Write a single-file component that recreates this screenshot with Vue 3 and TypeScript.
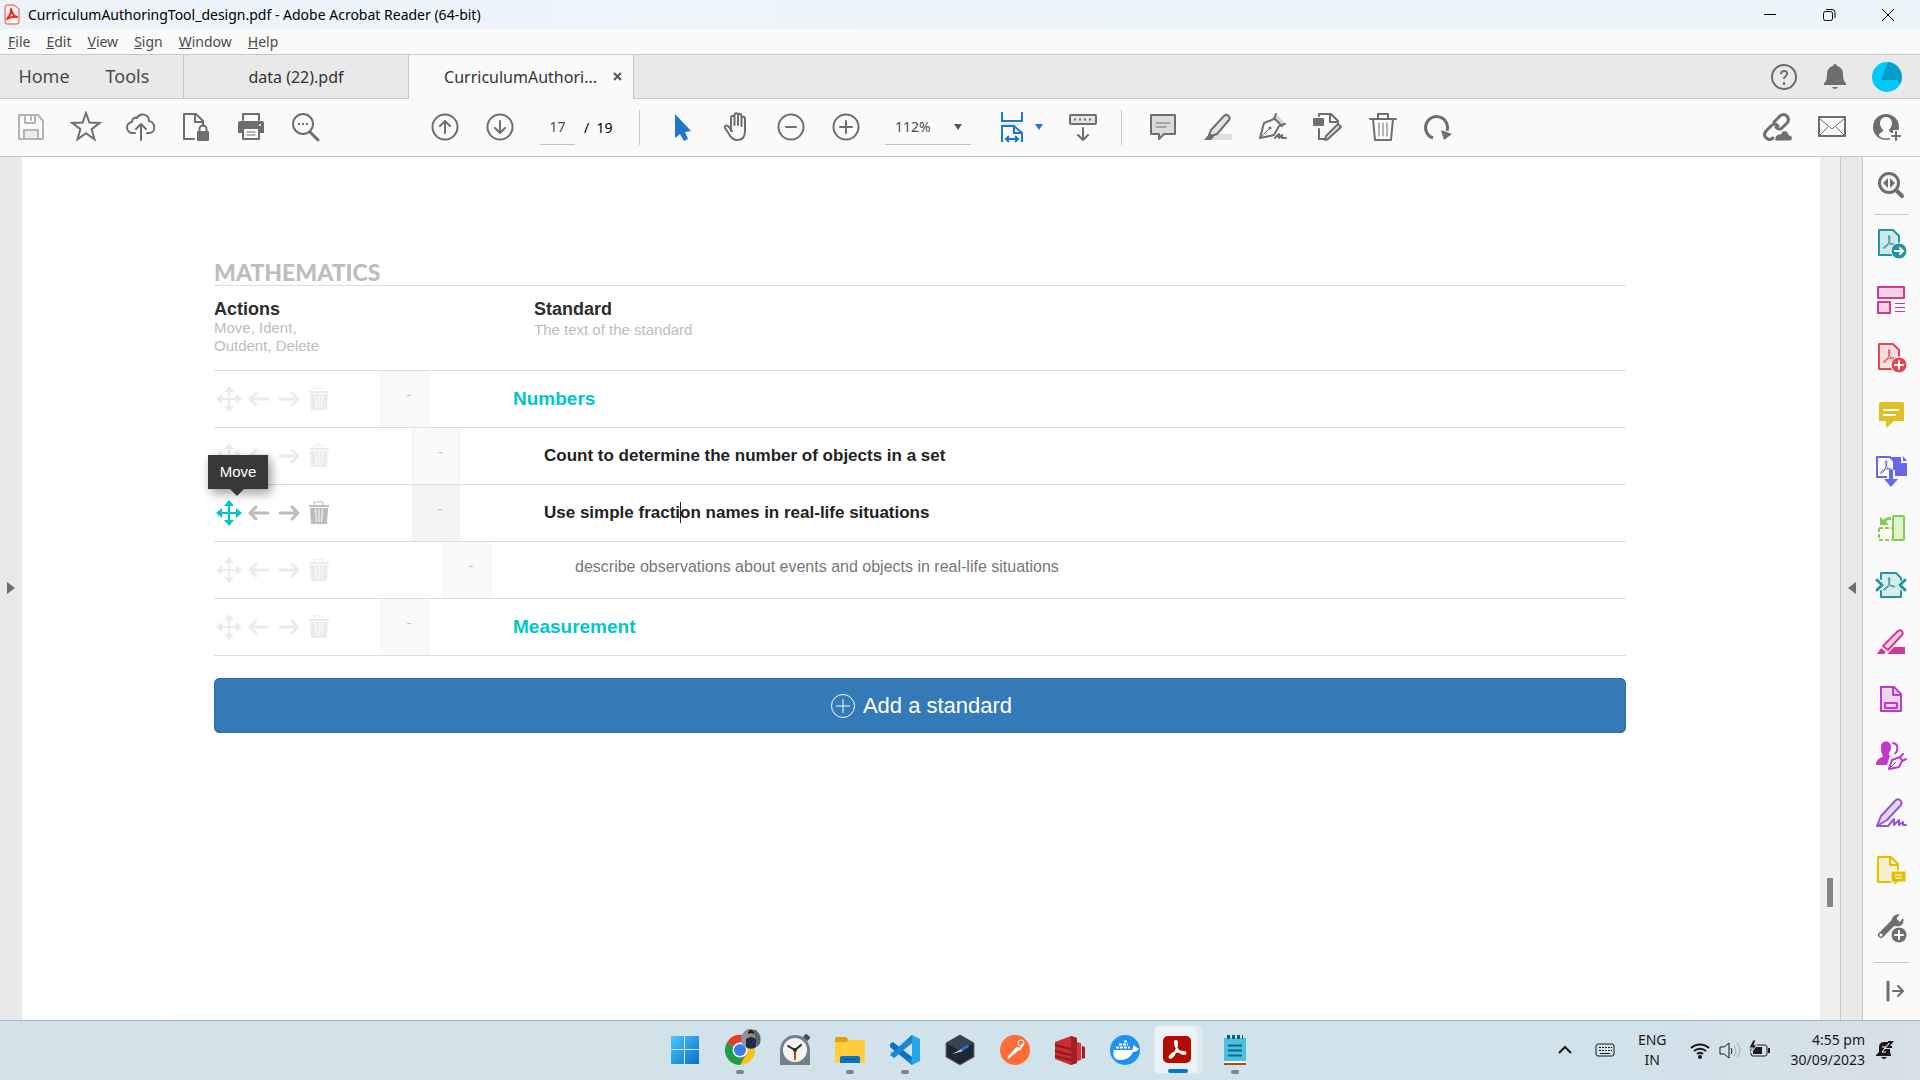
<script setup lang="ts">
interface Glyph {
  label: string
  body: string
}

interface Standard {
  level: number
  kind: 'strand' | 'outcome' | 'detail'
  text: string
  rest?: string
  active?: boolean
}

const menus: string[] = ['File', 'Edit', 'View', 'Sign', 'Window', 'Help']

const stroke = (color: string, width = 2) =>
  `fill="none" stroke="${color}" stroke-width="${width}" stroke-linecap="round" stroke-linejoin="round"`

// same as stroke(), for outlines that also carry a tint
const tinted = (color: string, fill: string) =>
  `fill="${fill}" stroke="${color}" stroke-width="2" stroke-linecap="round" stroke-linejoin="round"`

const G = '#6e6e6e'
const acroMark = (c: string, w = 1) =>
  `<path d="M14 9c-1 0-1 2 0 4 1 3 3 5 5 5 1 0 1-1 0-1-3-1-8 1-10 3-1 1 0 2 1 1 2-2 5-7 5-11 0-1-1-1-1-1z" ${stroke(c, w)}/>`

const fileTools: Glyph[] = [
  { label: 'Save', body: `<g ${stroke('#b4b4b4', 2)}><path d="M4 4h19l5 6v18H4z"/><path d="M10 4v8h10V4M16 6v3" /></g><path d="M9 28v-9h14v9z" ${tinted('#b4b4b4', '#ececec')}/>` },
  { label: 'Star', body: `<path d="M16 2l3.4 9.6 10.4.3-8.200 6.300 2.900 10L16 22.300 7.500 28.200l2.900-10L2.200 11.900l10.400-.3z" fill="none" stroke="${G}" stroke-width="2"/>` },
  { label: 'Upload to cloud', body: `<g ${stroke(G, 2)}><path d="M10 22H8a5.500 5.500 0 0 1-1-11c0-4 3-5 5-4 3-6 12-4 12 3 7 1 7 12 0 12h-2"/><path d="M16 29V14M11 18l5-5 5 5"/></g>` },
  { label: 'Protect', body: `<g ${stroke(G, 2)}><path d="M14 28H4V3h12l7 7v5"/><path d="M15 3v8h8"/></g><rect x="17" y="20" width="12" height="10" rx="1" fill="${G}"/><path d="M19.500 21v-3a3.500 3.500 0 0 1 7 0v3" ${stroke(G, 2)}/>` },
  { label: 'Print', body: `<path d="M8 9V3h16v6" ${stroke(G, 2)}/><path d="M5 10h22q2 0 2 2v10h-5v-4H8v4H3V12q0-2 2-2z" fill="${G}"/><path d="M8 17h16v11H8z" ${tinted(G, '#fafafa')}/><path d="M12 21h8M12 24h8" ${stroke(G, 1)}/><circle cx="25" cy="14" r="1" fill="#fff"/>` },
  { label: 'Find', body: `<circle cx="13" cy="13" r="10" ${stroke(G, 2)}/><path d="M20 21l8 8" ${stroke(G, 3)}/><path d="M8 13h2M12 13h2M16 13h2" stroke="${G}" stroke-width="2"/>` }
]

const pageTools: Glyph[] = [
  { label: 'Previous page', body: `<circle cx="16" cy="16" r="12.500" ${stroke(G, 2)}/><path d="M16 22V10M11 15l5-5 5 5" ${stroke(G, 2)}/>` },
  { label: 'Next page', body: `<circle cx="16" cy="16" r="12.500" ${stroke(G, 2)}/><path d="M16 10v12M11 17l5 5 5-5" ${stroke(G, 2)}/>` }
]

const viewTools: Glyph[] = [
  { label: 'Select', body: `<path d="M10 3v24l5-4 4 7 4-2-3-7 6-1z" fill="#2076cc"/>` },
  { label: 'Hand', body: `<path d="M10 20V7c0-3 3.500-3 3.500 0v7V4.500c0-3 3.500-3 3.500 0V14 5c0-3 3.500-3 3.500 0v10V8c0-3 3.500-3 3.500 0v12c0 6-3 9-8 9-4 0-6-2-8-6l-4-6c-1-2 1-3 3-2l4 5" transform="translate(1 0)" ${stroke(G, 2)}/>` },
  { label: 'Zoom out', body: `<circle cx="16" cy="16" r="12.500" ${stroke(G, 2)}/><path d="M11 16h10" ${stroke(G, 2)}/>` },
  { label: 'Zoom in', body: `<circle cx="16" cy="16" r="12.500" ${stroke(G, 2)}/><path d="M10 16h12M16 10v12" ${stroke(G, 2)}/>` }
]

const fitIcon = `<g fill="none" stroke="#2076cc" stroke-width="2"><path d="M6 1v9h20V1"/><path d="M6 31V15h12l8 7v9"/><path d="M18 15v7h8" /><path d="M10 28h12M13 25l-3 3 3 3M19 25l3 3-3 3"/></g><path d="M6 12h20v2H6z" fill="#d5e6f5"/>`
const keyboardIcon = `<rect x="3" y="4" width="26" height="9" rx="1" ${tinted(G, '#e4e4e4')}/><path d="M7 8.500h18" stroke="${G}" stroke-width="2" stroke-dasharray="2 3"/><path d="M16 17v12M11 24l5 5 5-5" ${stroke(G, 2)}/>`

const markupTools: Glyph[] = [
  { label: 'Comment', body: `<path d="M4 4h24v19H17l-5 5v-5H4z" ${tinted(G, '#dcdcdc')}/><path d="M9 12h14M9 16h10" ${stroke(G, 1)}/>` },
  { label: 'Highlight', body: `<path d="M11 23h19v6H8z" fill="#dedede"/><path d="M9 19L22 5c3-3 7 1 5 4L15 23l-6 2-2-1z" ${tinted(G, '#e4e4e4')}/><path d="M2 29l6-7 4 4-3 3z" fill="${G}"/>` },
  { label: 'Sign', body: `<path d="M19 3l10 10-3 1-9-8z" fill="#d5d5d5"/><path d="M19 3l-2 5-10 4L3 27l14-3 5-9 6-2M17 7l8 8" ${stroke(G, 2)}/><path d="M3 27l9-9" ${stroke(G, 1)}/><circle cx="13" cy="17" r="1.500" fill="${G}"/><path d="M18 27l4-4v4l3-3v3h4" ${stroke(G, 2)}/>` },
  { label: 'Edit PDF', body: `<g ${stroke(G, 2)}><path d="M7 5V3h12l7 7v2M18 3v8h8M7 18v10h6"/></g><path d="M29 16l-13 12-3 1 1-4 12-12z" ${tinted(G, '#dddddd')}/><rect x="1" y="7" width="11" height="8" rx="1" fill="${G}"/>` },
  { label: 'Delete', body: `<path d="M6 8l2 21h16l2-21M11 7V3h10v4M3 8h26" ${stroke(G, 2)}/><path d="M12 12v13M16 12v13M20 12v13" ${stroke(G, 1)}/>` },
  { label: 'Rotate', body: `<path d="M11 27a11 11 0 1 1 14-7" fill="none" stroke="${G}" stroke-width="3"/><path d="M19 19l11 4-8 6z" fill="${G}"/>` }
]

const shareTools: Glyph[] = [
  { label: 'Share link', body: `<g ${stroke(G, 3)}><path d="M13 11l6-6c5-4 11 2 7 7l-5 5c-2 2-5 1-6-1"/><path d="M17 15c-3-3-5-2-7 0l-5 5c-4 5 2 11 7 7"/></g><path d="M15 30h13c5 0 4-6 0-6-1-6-8-5-8-1-5-1-8 6-5 7z" fill="${G}" stroke="#fafafa"/>` },
  { label: 'Send by email', body: `<path d="M3 6h26v19H3z" ${stroke(G, 2)}/><path d="M3 7l13 11L29 7M3 25l9-9M29 25l-9-9" ${stroke(G, 1)}/>` },
  { label: 'Add people', body: `<circle cx="15" cy="16" r="13" fill="${G}"/><path d="M8 25c-1-3 5-4 4-6-6-7-2-13 3-13s9 6 3 13c-1 2 5 3 4 6q-7 5-14 0z" fill="#fafafa"/><path d="M25 19v11M19 25h11" stroke="#fafafa" stroke-width="6"/><path d="M25 21v8M21 25h8" ${stroke(G, 2)}/>` }
]

const docShape = (c: string, fill: string) =>
  `<path d="M4 3h14l6 6v19H4z" ${tinted(c, fill)}/>` + acroMark(c, 1)

const sideTools: Glyph[] = [
  { label: 'Export PDF', body: docShape('#21979b', '#d1e8ea') + `<circle cx="24" cy="24" r="8" fill="#21979b" stroke="#fafafa" stroke-width="1"/><path d="M20 24h8M25 21l3 3-3 3" ${stroke('#fff', 2)}/>` },
  { label: 'Organize pages', body: `<rect x="3" y="3" width="26" height="11" ${tinted('#d83790', '#f5d3e6')}/><rect x="3" y="18" width="12" height="11" ${tinted('#d83790', '#f5d3e6')}/><path d="M20 19.500h10M20 23.500h10M20 27.500h10" stroke="#d83790"/>` },
  { label: 'Create PDF', body: docShape('#e34850', '#f9dcdd') + `<circle cx="24" cy="24" r="8" fill="#e34850" stroke="#fafafa"/><path d="M20 24h8M24 20v8" ${stroke('#fff', 2)}/>` },
  { label: 'Comment', body: `<path d="M5 4h22q2 0 2 2v17H19l-8 7v-7H4V6z" fill="#dfbf28"/><path d="M9 12h14M9 17h11" ${stroke('#fff', 2)}/>` },
  { label: 'Combine files', body: `<path d="M17 2h9v6h6v13H19z" fill="#6767ec"/><path d="M28 1l4 5h-4z" fill="#6767ec"/><path d="M2 2h13l4 4v16H2z" ${tinted('#6767ec', '#fafafa')}/><g transform="translate(-3 -3)">${acroMark('#6767ec')}</g><path d="M16 15v13" stroke="#fafafa" stroke-width="8"/><path d="M14 15h4v9h5l-7 8-7-8h5z" fill="#6767ec"/>` },
  { label: 'Crop pages', body: `<rect x="18" y="4" width="11" height="24" rx="1" ${tinted('#82ce48', '#e0f2d2')}/><path d="M4 16h13M4 28h13M4 16v12" fill="none" stroke="#82ce48" stroke-width="2" stroke-dasharray="4 2"/><path d="M5 5v8h9l-3-3c1-2 3-2 5-2V5c-4 0-6 1-7 3z" fill="#82ce48"/>` },
  { label: 'Compress PDF', body: `<path d="M6 10V4h15l5 5v2l-3 5 3 5v7H6v-7l3-5-3-5z" fill="#d9edef"/><path d="M6 10V4h15l5 5v2M6 22v6h20v-6" ${stroke('#21979b', 2)}/>${acroMark('#21979b')}<path d="M2 11l5 5-5 5M30 11l-5 5 5 5" ${stroke('#21979b', 3)}/>` },
  { label: 'Redact', body: `<path d="M8 20L23 5c3-2 6 1 4 4L13 24z" ${tinted('#d83790', '#f7d3e6')}/><path d="M2 28l4-6 5 4-2 2zM12 28l7-7h11v7z" fill="#d83790"/>` },
  { label: 'Prepare form', body: `<path d="M6 4h13l7 7v17H6z" ${tinted('#c038cc', '#f0d5f2')}/><path d="M18 4v8h8M10 20h12v5H10z" ${stroke('#c038cc', 2)}/>` },
  { label: 'Request signatures', body: `<path d="M6 7c0-8 11-7 10 1 0 3-3 5-2 7l5 4-4 6H1c0-7 6-7 7-9-1-2-2-4-2-9z" fill="#c038cc"/><path d="M18 3c6 1 5 8 2 11" ${stroke('#c038cc', 2)}/><path d="M14 29l3-10 9-4 3 6-5 6z" fill="#fafafa" stroke="#fafafa" stroke-width="6"/><path d="M14 29l3-9 8-3 3-3M14 29l10-2 3-6 4-2M25 17l2 4" ${stroke('#c038cc', 2)}/><path d="M14 29l7-7" ${stroke('#c038cc', 1)}/>` },
  { label: 'Fill and sign', body: `<path d="M2 29l4-10L20 4c3-4 8 0 6 4L12 23z" ${tinted('#9256d9', '#e4d7f4')}/><path d="M2 29h11l6-7v6l5-5v5l4-3v3h3" ${stroke('#9256d9', 2)}/>` },
  { label: 'Send for comments', body: `<path d="M3 3h13l7 7v18H3z" ${tinted('#e0c000', '#f5f0cd')}/><path d="M15 3v8h8" ${stroke('#e0c000', 2)}/><path d="M16 17h15v11h-8l-4 4v-4h-3z" fill="#e0c000" stroke="#fafafa"/><path d="M20 21h7M20 24h7" stroke="#fff"/>` },
  { label: 'More tools', body: `<path d="M6 24L20 10" ${stroke(G, 6)}/><path d="M25 3l-4 5 4 3 3-4c2 5-2 10-8 8-6-3-4-12 5-12z" fill="${G}"/><circle cx="6" cy="24" r="1.500" fill="#fff"/><circle cx="24" cy="24" r="8" fill="${G}" stroke="#fafafa"/><path d="M20 24h8M24 20v8" ${stroke('#fff', 2)}/>` }
]

const searchSide = `<circle cx="14" cy="14" r="9.500" ${stroke(G, 3)}/><path d="M22 22l5 5" ${stroke(G, 4)}/><path d="M13 9v10l-5-5zM15 9v10l5-5z" fill="${G}"/>`
const collapseSide = `<path d="M13 7v18" ${stroke(G, 3)}/><path d="M18 16h9M23 11l5 5-5 5" ${stroke(G, 2)}/>`

const actions: Glyph[] = [
  { label: 'Move', body: `<path d="M16 3l5 6h-4v6h6v-4l6 5-6 5v-4h-6v6h4l-5 6-5-6h4v-6H9v4l-6-5 6-5v4h6V9h-4z"/>` },
  { label: 'Outdent', body: `<path d="M25 16H8M13 10l-6 6 6 6" fill="none" stroke="currentColor" stroke-width="3" stroke-linecap="round" stroke-linejoin="round"/>` },
  { label: 'Indent', body: `<path d="M7 16h17M19 10l6 6-6 6" fill="none" stroke="currentColor" stroke-width="3" stroke-linecap="round" stroke-linejoin="round"/>` },
  { label: 'Delete', body: `<path d="M6 8h20v2H6zM7 11h18l-1 16H8z"/><path d="M11 8V5h9v3" fill="none" stroke="currentColor" stroke-width="1"/><path d="M12.500 12l1 13M16 12v13M19.500 12l-1 13" stroke="#fff" stroke-width="1"/>` }
]

const standards: Standard[] = [
  { level: 0, kind: 'strand', text: 'Numbers' },
  { level: 1, kind: 'outcome', text: 'Count to determine the number of objects in a set' },
  { level: 1, kind: 'outcome', text: 'Use simple fracti', rest: 'on names in real-life situations', active: true },
  { level: 2, kind: 'detail', text: 'describe observations about events and objects in real-life situations' },
  { level: 0, kind: 'strand', text: 'Measurement' }
]

interface TaskApp extends Glyph {
  state?: 'running' | 'focused'
}

const taskApps: TaskApp[] = [
  { label: 'Start', body: `<defs><linearGradient id="win" x1="0" y1="0" x2="1" y2="1"><stop offset="0" stop-color="#4cc8fb"/><stop offset="1" stop-color="#0a6fc8"/></linearGradient></defs><path d="M2 2h13v13H2zM16 2h14v13H16zM2 16h13v14H2zM16 16h14v14H16z" fill="url(#win)"/>` },
  { label: 'Chrome', state: 'running', body: `<circle cx="16" cy="16" r="15" fill="#fbc116"/><path d="M16 16L3 8.500a15 15 0 0 1 26-.5H16z" fill="#e33b2e"/><path d="M3 8.500A15 15 0 0 0 16 31l6.500-11.500L16 16z" fill="#229a4c"/><circle cx="16" cy="16" r="7.500" fill="#fff"/><circle cx="16" cy="16" r="6" fill="#3a7de8"/><circle cx="27" cy="5" r="10" fill="#8f9494"/><path d="M18 1l5-5h9l4 6v7l-3 4-3-16-5-2z" fill="#59645f"/><circle cx="27" cy="0" r="3" fill="#a87c68"/><path d="M24-2q3-4 6 0v2q-3-2-6 0z" fill="#17171d"/><path d="M22 5q5-4 10 0v8q-5 3-10 0z" fill="#1f2b4c"/>` },
  { label: 'Clock', body: `<rect x="25" y="1" width="6" height="5" rx="1" transform="rotate(40 28 3)" fill="#4a4f55"/><path d="M1 31V16a15 15 0 0 1 30 0v15z" fill="#74808a"/><circle cx="16" cy="16" r="12" fill="#f3f3f3"/><path d="M16 16v10" stroke="#d3400f" stroke-width="2"/><path d="M9 12l7 4 6-5" fill="none" stroke="#2b2b2b" stroke-width="2" stroke-linecap="round"/><circle cx="16" cy="16" r="2" fill="#2b2b2b"/>` },
  { label: 'File Explorer', state: 'running', body: `<path d="M1 5q0-2 2-2h9l3 3h15v6H1z" fill="#dfa108"/><path d="M1 8h11l3-2h15q1 0 1 1v20q0 2-2 2H3q-2 0-2-2z" fill="#ffce3d"/><path d="M6 29v-5q0-2 2-2h16q2 0 2 2v5z" fill="#0f72c5"/><path d="M10 25.500h12" stroke="#0a4f94"/>` },
  { label: 'Visual Studio Code', state: 'running', body: `<path d="M23 1l8 4v22l-8 4z" fill="#27a4ee"/><path d="M23 1L3 19l-2-2 3 6 19-14z" fill="#1583cd"/><path d="M1 10l3-2 19 15v8L1 13z" fill="#0e6fba"/><path d="M23 1v8L5 24l-4-3zM23 31l-4-4 4-4z" fill="#1787d2"/>` },
  { label: 'Editor', body: `<path d="M16 1l14 8v14l-14 8-14-8V9z" fill="#202733" stroke="#69727b"/><path d="M16 1l14 8-14 8L2 9z" fill="#384250"/><path d="M8 20l10-5 1 2z" fill="#e6e8ea"/><path d="M16 15l8-4 1 2-7 4z" fill="#1e7ee0"/>` },
  { label: 'Postman', body: `<circle cx="16" cy="16" r="15" fill="#ff6c37"/><circle cx="22" cy="9" r="3" fill="none" stroke="#fff"/><path d="M8 25l10-12 3 2-8 7z" fill="#fff"/><path d="M9 24l9-10 3 1 3-5" fill="none" stroke="#fff" stroke-width="2"/>` },
  { label: 'Redis', body: `<path d="M1 8l16-6 6 2v25l-6 2-16-6z" fill="#c92d32"/><path d="M1 11l15 4 7-2M1 17l15 4 7-2M1 22l15 4 7-2" fill="none" stroke="#881c22" stroke-width="2"/><path d="M17 2l6 2v25l-6 2z" fill="#a51e24"/><path d="M23 8l4 1v17l-4 1z" fill="#d5373a"/><path d="M28 12l3 1v11l-3 1z" fill="#a51e24"/>` },
  { label: 'Docker', body: `<circle cx="16" cy="16" r="15" fill="#2191ed"/><path d="M5 16h18c2-3 1-5 2-5 2 2 2 3 5 3-1 3-4 4-6 4-3 7-9 8-13 8-5 0-8-4-6-10z" fill="#fff"/><path d="M7 13.500h14M10 10.500h9M15 7.500h3" stroke="#fff" stroke-width="2" stroke-dasharray="3 1"/>` },
  { label: 'Adobe Acrobat Reader', state: 'focused', body: `<rect x="2" y="2" width="28" height="27" rx="5" fill="#b30b00"/><path d="M15 7c-2 0-1 4 0 6 2 4 5 7 8 7 2 0 2-2 0-2-5-1-11 0-14 4-1 1 0 3 2 1 3-3 5-9 5-14 0-1 0-2-1-2z" ${stroke('#fff', 2)}/>` },
  { label: 'Notepad', state: 'running', body: `<path d="M5 25h22v6H5z" fill="#f5f5f5"/><path d="M5 29h22v2H5z" fill="#a44e10"/><path d="M5 4h22v23H5z" fill="#4cc0df"/><path d="M8 3h16" stroke="#0c5e7c" stroke-width="4" stroke-dasharray="3 2"/><path d="M9 11.500h14M9 16.500h14M9 21.500h14" stroke="#0f6787" stroke-width="2"/>` }
]

const K = '#1b1b1b'
const trayGlyphs: Glyph[] = [
  { label: 'Wi-Fi', body: `<g fill="none" stroke="${K}" stroke-width="2"><path d="M2 9a13 13 0 0 1 18 0M5 12a9 9 0 0 1 12 0M8 15a5 5 0 0 1 6 0"/></g><circle cx="11" cy="18" r="2" fill="${K}"/>` },
  { label: 'Volume', body: `<path d="M1 8h4l5-4v15l-5-4H1z" fill="none" stroke="${K}" stroke-width="1" stroke-linejoin="round"/><path d="M12 9q2 3 0 6" fill="none" stroke="${K}"/><path d="M15 7q4 5 0 10M18 4q6 7 0 14" fill="none" stroke="#9dabb2"/>` },
  { label: 'Battery', body: `<rect x="2" y="6" width="16" height="11" rx="2" fill="none" stroke="${K}" stroke-width="1"/><rect x="4" y="8" width="9" height="7" fill="${K}"/><rect x="19" y="9" width="2" height="5" fill="${K}"/><path d="M4 1L0 9h4l-2 5 6-8H5l2-5z" fill="${K}" stroke="#d3e2e9" stroke-width="1"/>` }
]
</script>

<template>
  <div class="app">
    <header class="titlebar">
      <svg class="appicon" width="16" height="22" viewBox="0 0 16 22">
        <path d="M3 1h7l5 4v13q0 2-2 2H3q-2 0-2-2V3q0-2 2-2z" fill="#fff0ef" stroke="#f04440" />
        <path d="M7 5c1 4 2 7 6 8-4-1-7 0-10 2 2-2 4-5 4-10z" fill="none" stroke="#e8281e" stroke-width="2" stroke-linejoin="round" />
      </svg>
      <h1>CurriculumAuthoringTool_design.pdf - Adobe Acrobat Reader (64-bit)</h1>
      <div class="winctl">
        <button aria-label="Minimize"><svg width="14" height="14"><path d="M1 6.500h12" stroke="#000" /></svg></button>
        <button aria-label="Restore">
          <svg width="14" height="14" fill="none" stroke="#000"><rect x="1.500" y="3.500" width="9" height="9" rx="2" /><path d="M4 1.500h6q3 0 3 3V10" /></svg>
        </button>
        <button aria-label="Close"><svg width="14" height="14"><path d="M1 1l12 12M13 1L1 13" stroke="#000" /></svg></button>
      </div>
    </header>

    <nav class="menubar">
      <button v-for="m in menus" :key="m"><u>{{ m[0] }}</u>{{ m.slice(1) }}</button>
    </nav>

    <div class="tabbar">
      <button class="home">Home</button>
      <button class="home tools">Tools</button>
      <button class="tab">data (22).pdf</button>
      <div class="tab current">
        <button class="tabname">CurriculumAuthori...</button>
        <button class="tabclose" aria-label="Close tab">
          <svg width="10" height="10"><path d="M1 1l7 7M8 1L1 8" stroke="#555" stroke-width="2" /></svg>
        </button>
      </div>
      <div class="account">
        <button aria-label="Help">
          <svg width="28" height="28" viewBox="0 0 28 28" fill="none" stroke="#6e6e6e" stroke-width="2"><circle cx="14" cy="14" r="12" /><path d="M11 11c0-4 7-4 6 0 0 2-3 2-3 5" /><path d="M14 19v3" /></svg>
        </button>
        <button aria-label="Notifications">
          <svg width="24" height="28" viewBox="0 0 24 28" fill="#6e6e6e"><path d="M12 1q2 0 2 2c4 1 6 4 6 8 0 5 1 8 3 9v2H1v-2c2-1 3-4 3-9 0-4 2-7 6-8q0-2 2-2zM9 24h6q-3 4-6 0z" /></svg>
        </button>
        <button aria-label="Profile">
          <svg width="30" height="30" viewBox="0 0 30 30"><circle cx="15" cy="15" r="15" fill="#00c8ff" /><path d="M16 0a15 15 0 0 1 12 22l-2-4H9z" fill="#009ec8" /></svg>
        </button>
      </div>
    </div>

    <div class="toolbar">
      <button v-for="t in fileTools" :key="t.label" class="tool" :aria-label="t.label">
        <svg width="32" height="32" viewBox="0 0 32 32" v-html="t.body"></svg>
      </button>
      <div class="pager">
        <button v-for="t in pageTools" :key="t.label" class="tool" :aria-label="t.label">
          <svg width="32" height="32" viewBox="0 0 32 32" v-html="t.body"></svg>
        </button>
        <input value="17" aria-label="Page number" />
        <span class="total">/&nbsp; 19</span>
      </div>
      <span class="divider"></span>
      <button v-for="t in viewTools" :key="t.label" class="tool" :aria-label="t.label">
        <svg width="32" height="32" viewBox="0 0 32 32" v-html="t.body"></svg>
      </button>
      <div class="zoom">
        <select aria-label="Zoom level"><option>112%</option></select>
        <svg width="8" height="6"><path d="M0 0h8L4 6z" fill="#555" /></svg>
      </div>
      <button class="tool fit" aria-label="Fit width">
        <svg width="32" height="32" viewBox="0 0 32 32" v-html="fitIcon"></svg>
        <svg width="8" height="6"><path d="M0 0h8L4 6z" fill="#2076cc" /></svg>
      </button>
      <button class="tool" aria-label="Show toolbar">
        <svg width="32" height="32" viewBox="0 0 32 32" v-html="keyboardIcon"></svg>
      </button>
      <span class="divider"></span>
      <button v-for="t in markupTools" :key="t.label" class="tool" :aria-label="t.label">
        <svg width="32" height="32" viewBox="0 0 32 32" v-html="t.body"></svg>
      </button>
      <div class="share">
        <button v-for="t in shareTools" :key="t.label" class="tool" :aria-label="t.label">
          <svg width="32" height="32" viewBox="0 0 32 32" v-html="t.body"></svg>
        </button>
      </div>
    </div>

    <div class="work">
      <button class="rail" aria-label="Open navigation pane">
        <svg width="8" height="12"><path d="M0 0v12l8-6z" fill="#6e6e6e" /></svg>
      </button>

      <main class="page">
        <h2>MATHEMATICS</h2>
        <table>
          <thead>
            <tr>
              <th class="c-actions">Actions<small>Move, Ident,<br />Outdent, Delete</small></th>
              <th class="c-standard">Standard<small>The text of the standard</small></th>
            </tr>
          </thead>
          <tbody>
            <tr v-for="(s, i) in standards" :key="i" :class="{ active: s.active }">
              <td>
                <div class="actions">
                  <button v-for="a in actions" :key="a.label" :class="{ hot: s.active && a.label === 'Move' }" :aria-label="a.label">
                    <svg width="32" height="32" viewBox="0 0 32 32" fill="currentColor" v-html="a.body"></svg>
                  </button>
                  <span v-if="s.active" class="tip" role="tooltip">Move</span>
                </div>
              </td>
              <td>
                <div class="line" :class="[s.kind, 'level' + s.level]">
                  <button class="fold" aria-label="Collapse">-</button>
                  <span class="text">{{ s.text }}<i v-if="s.rest" class="caret"></i>{{ s.rest }}</span>
                </div>
              </td>
            </tr>
          </tbody>
        </table>
        <button class="add">
          <svg width="26" height="26" fill="none" stroke="#fff"><circle cx="13" cy="13" r="11.500" /><path d="M6 13h14M13 6v14" /></svg>
          Add a standard
        </button>
      </main>

      <div class="scroll"><span class="thumb"></span></div>
      <button class="rail right" aria-label="Close tools pane">
        <svg width="8" height="12"><path d="M8 0v12L0 6z" fill="#6e6e6e" /></svg>
      </button>
      <aside class="side">
        <button aria-label="Search tools"><svg width="32" height="32" viewBox="0 0 32 32" v-html="searchSide"></svg></button>
        <hr />
        <button v-for="t in sideTools" :key="t.label" :aria-label="t.label">
          <svg width="32" height="32" viewBox="0 0 32 32" v-html="t.body"></svg>
        </button>
        <hr class="last" />
        <button aria-label="Collapse tools"><svg width="32" height="32" viewBox="0 0 32 32" v-html="collapseSide"></svg></button>
      </aside>
    </div>

    <footer class="taskbar">
      <div class="apps">
        <button v-for="t in taskApps" :key="t.label" :class="t.state" :aria-label="t.label">
          <svg width="32" height="32" viewBox="0 0 32 32" overflow="visible" v-html="t.body"></svg>
        </button>
      </div>
      <div class="tray">
        <button aria-label="Hidden icons"><svg width="14" height="10"><path d="M1 8l6-6 6 6" fill="none" stroke="#1b1b1b" stroke-width="2" /></svg></button>
        <button class="kbd" aria-label="Touch keyboard">
          <svg width="20" height="14" fill="none" stroke="#1b1b1b"><rect x="1" y="1" width="18" height="12" rx="2" /><path d="M4 4.500h13M4 7.500h13" stroke-dasharray="2 1" /><path d="M5 10.500h10" /></svg>
        </button>
        <button class="lang">ENG<br />IN</button>
        <button class="status" aria-label="Quick settings">
          <svg v-for="t in trayGlyphs" :key="t.label" width="22" height="22" viewBox="0 0 22 22" v-html="t.body"></svg>
        </button>
        <button class="clock">4:55 pm<br />30/09/2023</button>
        <button class="bell" aria-label="Notifications">
          <svg width="20" height="20" viewBox="0 0 20 20"><path d="M9 2c-4 0-5 3-5 6v4l-3 3v1h15v-1l-1-3V2z" fill="#1b1b1b" /><path d="M6 17h6q-3 4-6 0z" fill="#1b1b1b" /><path d="M7 7h4l-4 5h4" fill="none" stroke="#fff" /><path d="M13 2h4l-4 5h4" fill="none" stroke="#d3e2e9" stroke-width="4" /><path d="M13 2h4l-4 5h4" fill="none" stroke="#1b1b1b" stroke-width="2" /></svg>
        </button>
      </div>
    </footer>
  </div>
</template>

<style>
body {
  margin: 0;
}
</style>

<style scoped>
* {
  box-sizing: border-box;
}
.app {
  display: flex;
  flex-direction: column;
  min-height: 100vh;
  background: #fafafa;
  color: #000;
  font-family: "Noto Sans", "Open Sans", sans-serif;
  font-size: 14px;
}
button {
  padding: 0;
  border: 0;
  background: none;
  color: inherit;
  font: inherit;
}
svg {
  display: block;
  flex: none;
}
.titlebar {
  display: flex;
  align-items: center;
  height: 29px;
  padding-left: 4px;
  background: linear-gradient(90deg, #ebf3f8, #eef4fb 30%, #ebf4f8 60%);
}
h1 {
  flex: 1;
  margin: 0 0 0 8px;
  font-size: 14px;
  font-weight: 400;
}
.winctl {
  display: flex;
  padding-right: 3px;
}
.winctl button {
  display: grid;
  place-items: center;
  width: 59px;
  height: 28px;
}
.menubar {
  display: flex;
  gap: 16px;
  align-items: center;
  height: 25px;
  padding-left: 8px;
  color: #4b4b4b;
}
.tabbar {
  display: flex;
  height: 45px;
  border: solid #c8c8c8;
  border-width: 1px 0;
  background: #e9e9e9;
  color: #4b4b4b;
}
.home {
  width: 88px;
  padding-bottom: 2px;
  font-size: 18px;
}
.tools {
  width: 95px;
  padding-right: 16px;
}
.tab {
  width: 225px;
  border-left: 1px solid #c8c8c8;
  color: #333;
  font-size: 16px;
}
.current {
  display: flex;
  gap: 16px;
  align-items: center;
  justify-content: flex-end;
  width: 226px;
  margin-bottom: -1px;
  padding-right: 10px;
  border-right: 1px solid #c8c8c8;
  background: #fafafa;
}
.account {
  display: flex;
  gap: 25px;
  align-items: center;
  margin-left: auto;
  padding-right: 18px;
}
.toolbar {
  display: flex;
  align-items: center;
  height: 58px;
  padding: 0 0 1px 3px;
  border-bottom: 1px solid #c8c8c8;
}
.tool {
  display: flex;
  align-items: center;
  justify-content: center;
  width: 55px;
  height: 40px;
}
.pager {
  display: flex;
  align-items: center;
  margin-left: 84px;
}
.pager input {
  width: 35px;
  height: 35px;
  margin-left: 13px;
  padding: 0;
  border: 0;
  border-bottom: 1px solid #c0c0c0;
  background: none;
  color: #4b4b4b;
  font: inherit;
  text-align: center;
}
.total {
  width: 64px;
  padding-left: 9px;
}
.divider {
  width: 1px;
  height: 35px;
  margin-right: 13px;
  background: #c8c8c8;
}
.zoom {
  display: flex;
  align-items: center;
  width: 86px;
  height: 35px;
  margin: 0 12px;
  padding: 0 9px 0 10px;
  border-bottom: 1px solid #c0c0c0;
}
.zoom select {
  flex: 1;
  padding: 0;
  border: 0;
  appearance: none;
  background: none;
  color: #4b4b4b;
  font: inherit;
}
.fit {
  gap: 7px;
  width: 72px;
}
.fit + .tool {
  margin-right: 11px;
}
.share {
  display: flex;
  margin-left: auto;
  padding-right: 6px;
}
.work {
  display: flex;
  flex: 1;
  align-items: stretch;
}
.rail {
  display: grid;
  place-items: center;
  width: 22px;
  padding-bottom: 2px;
  background: #e9e9e9;
}
.right {
  width: 23px;
  border: solid #c8c8c8;
  border-width: 0 1px;
}
.page {
  flex: 1;
  padding: 102px 194px 0 192px;
  background: #fff;
  font-family: "Liberation Sans", Arial, sans-serif;
}
h2 {
  margin: 0;
  border-bottom: 1px solid #dcdcdc;
  color: #bdbdbd;
  font-family: Lato, sans-serif;
  font-size: 23px;
  font-weight: 900;
  line-height: 26px;
}
table {
  width: 100%;
  border-collapse: separate;
  border-spacing: 0;
  table-layout: fixed;
}
th {
  height: 85px;
  padding: 13px 0 0;
  border-bottom: 1px solid #dcdcdc;
  color: #2d2d2d;
  font-size: 18px;
  line-height: 20px;
  text-align: left;
  vertical-align: top;
}
th small {
  display: block;
  color: #bdbdbd;
  font-size: 15px;
  font-weight: 400;
  line-height: 18px;
}
.c-actions {
  width: 167px;
}
.c-standard {
  padding-left: 153px;
}
.c-standard small {
  line-height: 22px;
}
td {
  height: 57px;
  padding: 0;
  border-bottom: 1px solid #dcdcdc;
}
.actions {
  position: relative;
  display: flex;
  color: #ebebeb;
}
.actions button {
  display: flex;
  justify-content: center;
  width: 30px;
}
.active .actions {
  color: #bcbcbc;
}
.active .hot {
  color: #00c6cc;
}
.tip {
  position: absolute;
  bottom: 40px;
  left: -6px;
  width: 60px;
  background: #383838;
  box-shadow: 3px 4px 10px rgba(0, 0, 0, 0.4);
  color: #fff;
  font-size: 15px;
  line-height: 34px;
  text-align: center;
}
.tip::after {
  position: absolute;
  top: 34px;
  left: 22px;
  border: solid transparent;
  border-width: 7px 7px 0;
  border-top-color: #383838;
  content: "";
}
.line {
  display: flex;
  align-items: center;
  height: 56px;
}
.level1 {
  padding-left: 31px;
}
.level2 {
  padding-left: 62px;
}
.fold {
  width: 48px;
  height: 56px;
  padding: 0 0 10px 8px;
  border: solid #f4f4f4;
  border-width: 0 1px;
  background: #fafafa;
  color: #c4c4c4;
  font-size: 15px;
}
.active .fold {
  background: #f4f4f4;
}
.text {
  padding-left: 84px;
}
.strand {
  color: #00c6cc;
  font-size: 19px;
  font-weight: 700;
}
.outcome {
  color: #222;
  font-size: 17px;
  font-weight: 700;
}
.detail {
  color: #777;
  font-size: 16px;
}
.detail .text {
  padding-bottom: 7px;
}
.line .fold {
  font-weight: 400;
}
.caret {
  position: relative;
}
.caret::after {
  position: absolute;
  top: -1px;
  left: 0;
  width: 1px;
  height: 21px;
  background: #222;
  content: "";
}
.add {
  display: flex;
  gap: 7px;
  align-items: center;
  justify-content: center;
  width: 100%;
  height: 55px;
  margin-top: 22px;
  padding-left: 2px;
  border: 1px solid #2e6da4;
  border-radius: 5px;
  background: #337ab7;
  color: #fff;
  font-size: 22px;
}
.scroll {
  display: flex;
  flex-direction: column;
  justify-content: flex-end;
  width: 20px;
  padding: 0 7px 113px;
  background: #f0f0f0;
}
.thumb {
  height: 29px;
  background: #868686;
}
.side {
  display: flex;
  flex-direction: column;
  width: 57px;
}
.side button {
  display: grid;
  place-items: center;
  width: 57px;
  height: 57px;
  padding: 0 2px 2px 0;
}
hr {
  width: 35px;
  height: 1px;
  margin: 0 auto;
  border: 0;
  background: #c8c8c8;
}
.last {
  margin-top: 6px;
}
.taskbar {
  display: flex;
  align-items: center;
  justify-content: flex-end;
  height: 60px;
  padding-bottom: 1px;
  border-top: 1px solid #a9b4ba;
  background: linear-gradient(90deg, #d3e2e9, #d0e2ea 60%, #d0e2ea 85%, #d8dfe6);
  color: #1b1b1b;
}
.apps {
  display: flex;
  flex: 1;
  justify-content: flex-end;
}
.apps button {
  position: relative;
  display: grid;
  place-items: center;
  width: 55px;
  height: 58px;
}
.apps .focused {
  width: 49px;
  height: 49px;
  margin: 4px 4px 0 2px;
  padding-right: 4px;
  border: 1px solid #dce6eb;
  border-radius: 5px;
  background: #ebf1f4;
  box-shadow: inset -5px 0 0 #dfe8ec;
}
.running::after,
.focused::after {
  position: absolute;
  bottom: 5px;
  left: 24px;
  width: 8px;
  height: 4px;
  border-radius: 2px;
  background: #7d868b;
  content: "";
}
.focused::after {
  bottom: 0;
  left: 13px;
  width: 20px;
  background: #0078d4;
}
.tray {
  display: flex;
  flex: 1;
  align-items: center;
  justify-content: flex-end;
  max-width: 658px;
  padding-right: 25px;
}
.kbd {
  margin: 0 23px;
}
.lang {
  line-height: 20px;
}
.status {
  display: flex;
  gap: 8px;
  margin: 0 20px 0 22px;
}
.clock {
  line-height: 20px;
  text-align: right;
}
.bell {
  margin-left: 10px;
}
</style>
